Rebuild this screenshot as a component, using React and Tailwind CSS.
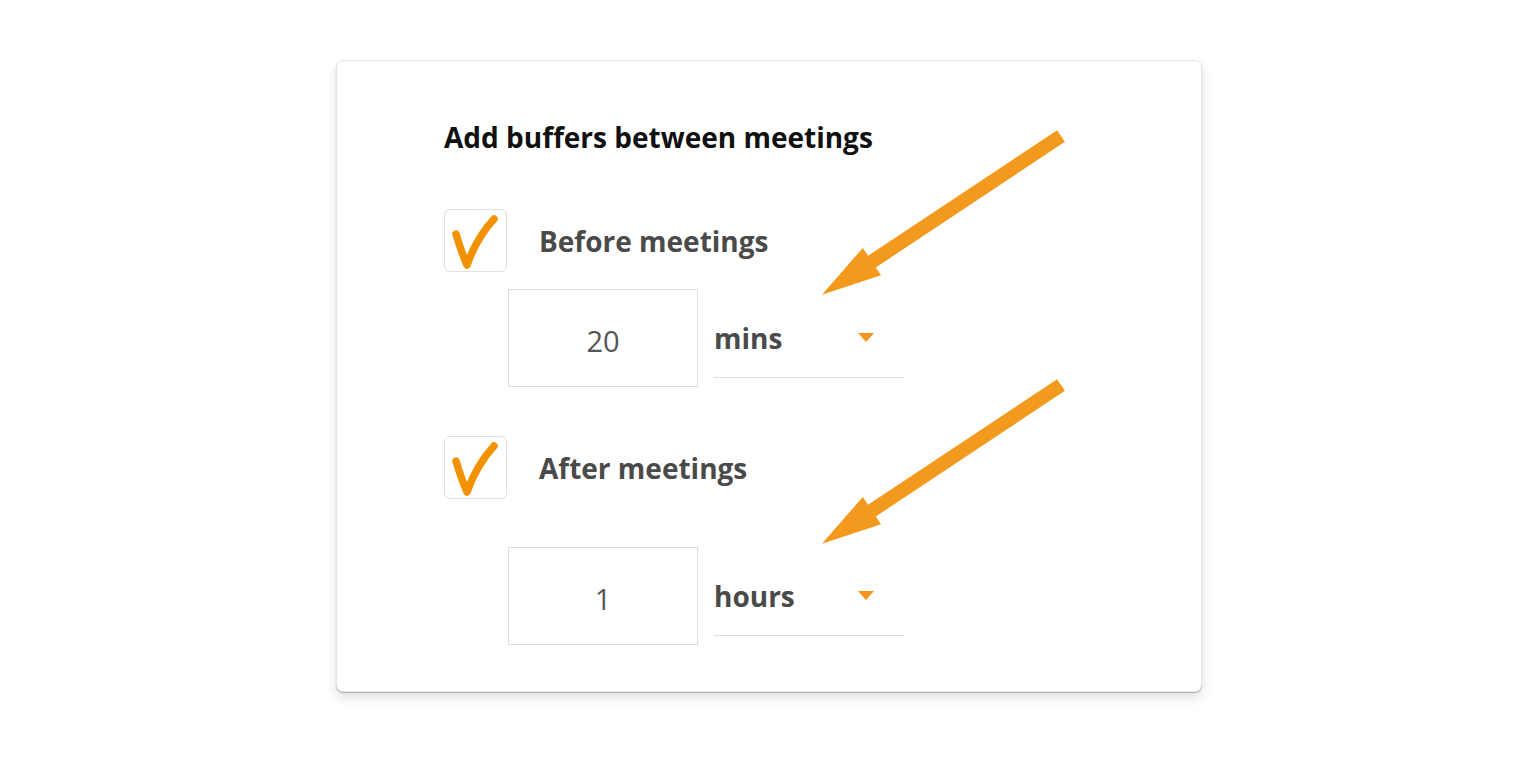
import React from "react";

const font = { fontFamily: "'Open Sans', Lato, 'Liberation Sans', sans-serif" };

function Tick() {
  return (
    <svg width="63" height="63" viewBox="0 0 63 63" className="block">
      <path
        d="M11 24 C14 34 18 46 22 55 C28 38 37 22 49 9"
        fill="none"
        stroke="#f39200"
        strokeWidth="7.5"
        strokeLinecap="round"
        strokeLinejoin="round"
      />
    </svg>
  );
}

function CheckRow({ label }) {
  return (
    <div className="flex items-center gap-8">
      <div className="w-[63px] h-[63px] rounded-[6px] border border-[#e0e0e0] bg-white">
        <Tick />
      </div>
      <span className="text-[28px] font-bold text-[#4a4a4a] leading-none">{label}</span>
    </div>
  );
}

function DurationRow({ value, unit }) {
  return (
    <div className="flex items-start gap-4 ml-16">
      <div className="w-[190px] h-[98px] border border-[#dddddd] flex items-center justify-center text-[29px] text-[#555555] leading-none pt-[4px]">
        {value}
      </div>
      <div className="w-[190px] h-[89px] border-b border-[#dcdcdc] flex items-center justify-between pt-[9px] pr-[30px]">
        <span className="text-[28px] font-bold text-[#4a4a4a] leading-none">{unit}</span>
        <svg width="16" height="9" viewBox="0 0 16 9">
          <path d="M0 0 H16 L8 9 Z" fill="#f5951f" />
        </svg>
      </div>
    </div>
  );
}

// one straight block arrow drawn along the x axis, then rotated into place
function Arrow({ x, y }) {
  return (
    <g transform={`translate(${x} ${y}) rotate(146.4)`}>
      <polygon
        points="0,-7 227,-7 227,-16.5 287,0 227,16.5 227,7 0,7"
        fill="#f39a1e"
      />
    </g>
  );
}

export default function App() {
  return (
    <div className="min-h-[781px] bg-white pt-[60px] pl-[336px]" style={font}>
      <div className="relative w-[866px] h-[632px] rounded-[7px] bg-white border border-[#e6e6e6] shadow-[0_1px_1px_rgba(0,0,0,0.25),0_6px_12px_rgba(0,0,0,0.12)] pl-[107px] pt-[62px]">
        <h2 className="text-[28px] font-bold text-[#111111] leading-none">
          Add buffers between meetings
        </h2>

        <div className="mt-[58px] flex flex-col">
          <CheckRow label="Before meetings" />
          <div className="mt-[17px]">
            <DurationRow value="20" unit="mins" />
          </div>
          <div className="mt-[49px]">
            <CheckRow label="After meetings" />
          </div>
          <div className="mt-[48px]">
            <DurationRow value="1" unit="hours" />
          </div>
        </div>

        <svg
          className="absolute left-0 top-0 pointer-events-none"
          width="866"
          height="632"
          viewBox="0 0 866 632"
        >
          <Arrow x={724} y={75} />
          <Arrow x={724} y={324} />
        </svg>
      </div>
    </div>
  );
}
